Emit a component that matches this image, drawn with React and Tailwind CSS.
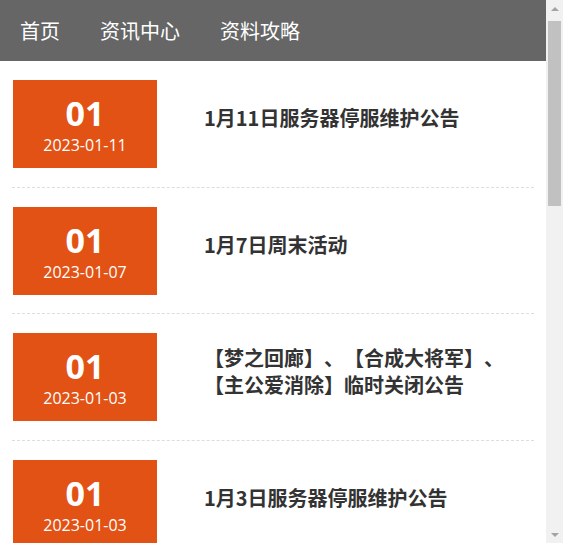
const NAV = ['首页', '资讯中心', '资料攻略']

const NEWS = [
  { day: '01', date: '2023-01-11', title: '1月11日服务器停服维护公告' },
  { day: '01', date: '2023-01-07', title: '1月7日周末活动' },
  { day: '01', date: '2023-01-03', title: '【梦之回廊】、【合成大将军】、【主公爱消除】临时关闭公告' },
  { day: '01', date: '2023-01-03', title: '1月3日服务器停服维护公告' }
]

function ScrollBar() {
  return (
    <div className="w-[17px] h-full bg-[#f1f1f1] flex flex-col items-center shrink-0">
      <div className="h-[17px] w-full flex items-center justify-center">
        <div className="w-0 h-0 border-l-[4px] border-r-[4px] border-b-[4px] border-l-transparent border-r-transparent border-b-[#a3a3a3]" />
      </div>
      <div className="w-[17px] px-[2px] mt-[4px]">
        <div className="h-[185px] bg-[#c1c1c1]" />
      </div>
      <div className="flex-1" />
      <div className="h-[17px] w-full flex items-center justify-center">
        <div className="w-0 h-0 border-l-[4px] border-r-[4px] border-t-[4px] border-l-transparent border-r-transparent border-t-[#a3a3a3]" />
      </div>
    </div>
  )
}

export default function App() {
  return (
    <div className="h-[543px] w-[567px] overflow-hidden flex bg-white font-['Noto_Sans_CJK_SC',sans-serif] [text-spacing-trim:space-all]">
      <div className="w-[546px] shrink-0">
        {/* top nav */}
        <div className="h-[61px] bg-[#666666] flex items-center pl-5 gap-10">
          {NAV.map((item) => (
            <a key={item} className="text-white text-[20px] leading-none">{item}</a>
          ))}
        </div>

        {/* news list */}
        <ul className="px-[12px]">
          {NEWS.map((n, i) => (
            <li key={i} className="flex items-center py-[18.85px] border-b border-dashed border-[#dddddd]">
              <div className="w-[144px] h-[88px] ml-px bg-[#e25214] text-white flex flex-col items-center pt-[13px] shrink-0">
                <span className="text-[34px] font-bold leading-[40px] font-['Open_Sans',sans-serif]">{n.day}</span>
                <span className="text-[16px] leading-[22px] mt-[1px] font-['Open_Sans',sans-serif]">{n.date}</span>
              </div>
              <p className="ml-[47px] mb-[12px] w-[330px] text-[20px] font-bold text-[#333333] leading-[27px]">{n.title}</p>
            </li>
          ))}
        </ul>
      </div>
      <ScrollBar />
    </div>
  )
}
